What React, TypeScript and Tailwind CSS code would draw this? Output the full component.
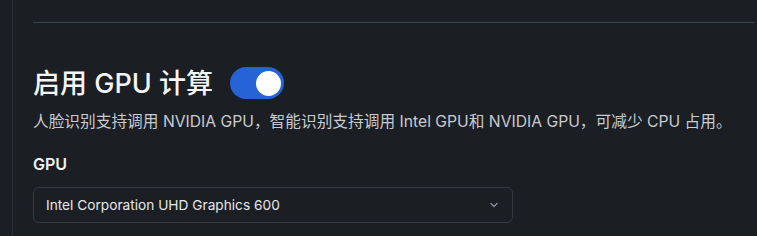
import React from "react";

export default function App() {
  return (
    <div
      className="flex h-[236px] w-full overflow-hidden bg-[#1b1e23]"
      style={{ fontFamily: 'Inter, "Noto Sans CJK SC", sans-serif' }}
    >
      <div className="w-[13px] shrink-0 border-r border-[#2b2f35]" />
      <div className="flex flex-1 flex-col pl-[20px] pr-[2px] pt-[22px]">
        <div className="border-t border-[#39444a]" />
        <div className="mt-[44px] flex h-[32px] items-center gap-[17px]">
          <span className="text-[27px] font-medium leading-none text-[#f4f5f7]">
            启用 GPU 计算
          </span>
          <button className="flex h-[32px] w-[54px] items-center rounded-full bg-[#2563d6] px-[3px] justify-end">
            <span className="block h-[25px] w-[25px] rounded-full bg-white" />
          </button>
        </div>
        <p className="mt-[13px] text-[15.7px] leading-[20px] text-[#c8ccd2]">
          人脸识别支持调用 NVIDIA GPU，智能识别支持调用 Intel GPU和 NVIDIA GPU，可减少 CPU 占用。
        </p>
        <div className="mt-[22px] text-[16px] font-semibold leading-[20px] text-[#eef0f3]">
          GPU
        </div>
        <div className="mt-[13px] flex h-[36px] w-[480px] items-center justify-between rounded-[6px] border border-[#353a42] bg-[#1b1e23] pl-[12px] pr-[12px]">
          <span className="text-[13.7px] text-[#e6e8eb]">Intel Corporation UHD Graphics 600</span>
          <svg width="10" height="10" viewBox="0 0 10 10" fill="none" className="mr-[1px]">
            <path d="M2 3.5 L5 6.5 L8 3.5" stroke="#8a93a5" strokeWidth="1.3" strokeLinecap="round" strokeLinejoin="round" />
          </svg>
        </div>
      </div>
    </div>
  );
}
